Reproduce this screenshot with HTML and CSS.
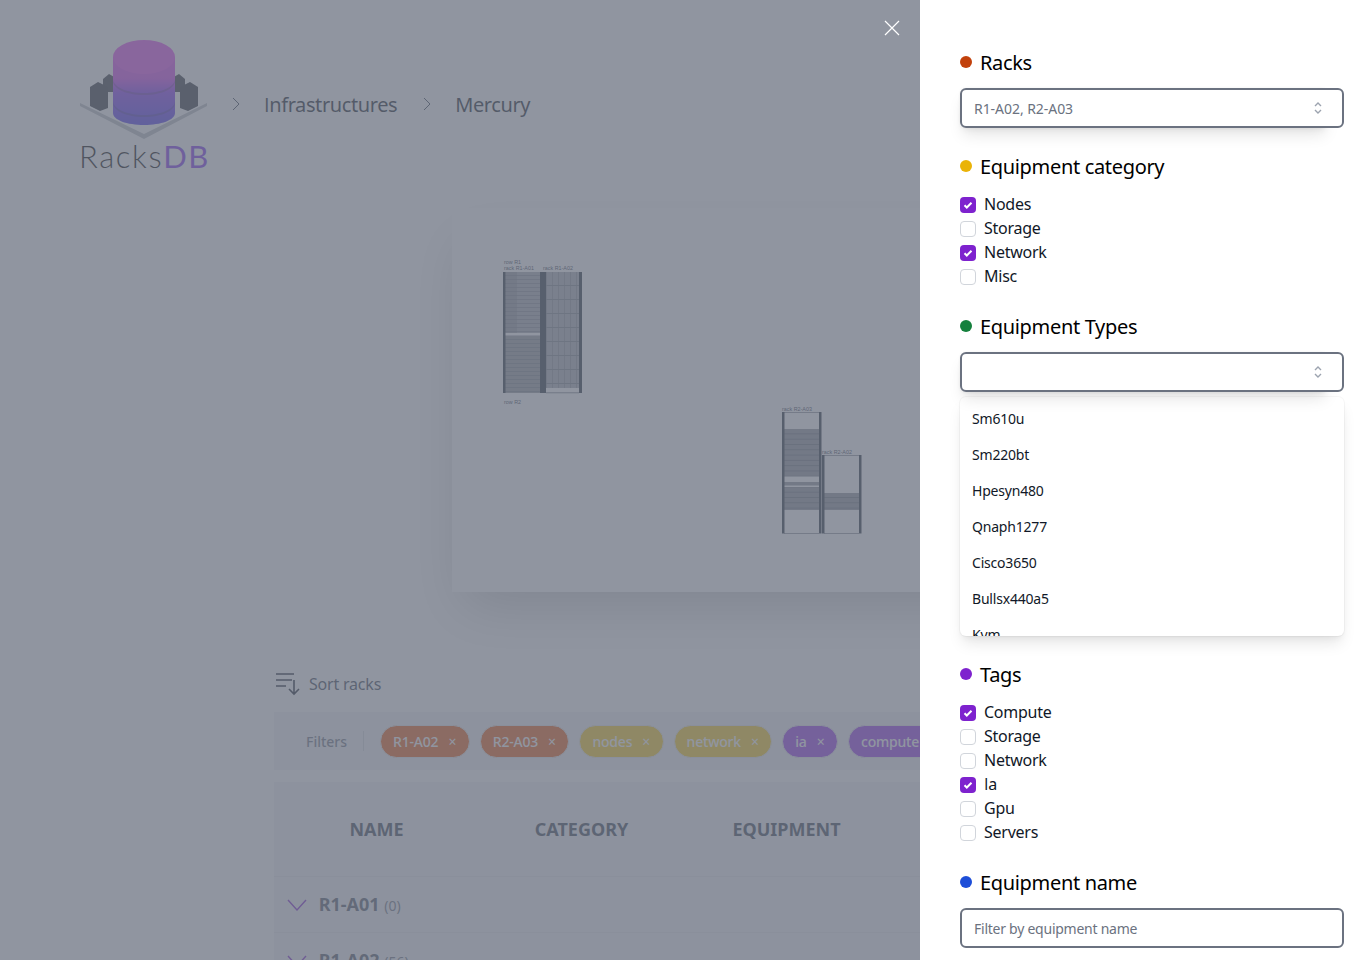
FILE: index.html
```html
<!DOCTYPE html>
<html>
  <head>
    <meta charset="utf-8" />
    <title>RacksDB</title>
    <link rel="stylesheet" href="styles.css">
  </head>
  <body>
    <header class="top">
      <div class="brand">
        <svg class="logo" viewBox="79 40 130 100" width="130" height="100">
          <defs>
            <linearGradient id="stack" x1="0" y1="40" x2="0" y2="125" gradientUnits="userSpaceOnUse">
              <stop offset="0" stop-color="#e040f0"/>
              <stop offset=".45" stop-color="#d03cf0"/>
              <stop offset=".62" stop-color="#8030f5"/>
              <stop offset="1" stop-color="#4432ee"/>
            </linearGradient>
          </defs>
          <polygon points="80,103 144,134 207,103 207,106 144,139 80,106" fill="#bcbec3"/>
          <polygon points="103,79 109,74 116,78 116,92 103,92" fill="#2e323a"/>
          <polygon points="172,78 179,74 185,79 185,92 172,92" fill="#2e323a"/>
          <polygon points="90,87 98,82 108,87 108,108 100,111 90,106" fill="#282c34"/>
          <polygon points="198,87 190,82 180,87 180,108 188,111 198,106" fill="#282c34"/>
          <path d="M113 57v56c0 7 14 12 31 12s31-5 31-12V57z" fill="url(#stack)"/>
          <path d="M113 79c0 8 14 14 31 14s31-6 31-14v2c0 8-14 14-31 14s-31-6-31-14z" fill="#5a2a90" opacity=".5"/>
          <path d="M113 101c0 8 14 14 31 14s31-6 31-14v2c0 8-14 14-31 14s-31-6-31-14z" fill="#3a2a90" opacity=".5"/>
          <ellipse cx="144" cy="57" rx="31" ry="17" fill="#e444f2"/>
        </svg>
        <div class="logo-text">Racks<span class="logo-db">DB</span></div>
      </div>
      <nav class="crumbs">
        <svg class="crumb-sep" viewBox="0 0 8 14" width="8" height="14"><path d="M1 1l6 6-6 6" fill="none" stroke="#374151" stroke-width="1"/></svg>
        <a class="crumb"><span class="plain-i">I</span>nfrastructures</a>
        <svg class="crumb-sep" viewBox="0 0 8 14" width="8" height="14"><path d="M1 1l6 6-6 6" fill="none" stroke="#374151" stroke-width="1"/></svg>
        <a class="crumb">Mercury</a>
      </nav>
    </header>

    <section class="diagram">
      <svg viewBox="452 208 620 384" width="620" height="384">
        <defs>
          <pattern id="rows" x="0" y="272" width="8" height="4" patternUnits="userSpaceOnUse">
            <rect width="8" height="4" fill="#a4a7ae"/>
            <rect y="3" width="8" height="1" fill="#858992"/>
          </pattern>
          <pattern id="grid" x="546" y="272" width="6" height="14" patternUnits="userSpaceOnUse">
            <rect width="6" height="14" fill="#a8abb2"/>
            <rect width="1" height="14" fill="#8a8e97"/>
            <rect y="13" width="6" height="1" fill="#7a7f89"/>
          </pattern>
          <pattern id="units" x="0" y="429" width="8" height="5.3" patternUnits="userSpaceOnUse">
            <rect width="8" height="5.3" fill="#8a8e96"/>
            <rect y="4.5" width="8" height=".8" fill="#646973"/>
          </pattern>
        </defs>

        <text class="tiny" x="504" y="264">row R1</text>
        <text class="tiny" x="504" y="270">rack R1-A01</text>
        <text class="tiny" x="543" y="270">rack R1-A02</text>
        <text class="tiny" x="504" y="404">row R2</text>
        <text class="tiny" x="782" y="411">rack R2-A03</text>
        <text class="tiny" x="822" y="454">rack R2-A02</text>

        <rect x="505" y="272" width="36" height="121" fill="url(#rows)"/>
        <rect x="506" y="272" width="11" height="61" fill="#6b707a" opacity=".35"/>
        <rect x="505" y="333" width="36" height="2.5" fill="#fff"/>
        <rect x="505" y="336" width="36" height="57" fill="#5d626c" opacity=".25"/>
        <rect x="503" y="272" width="2.5" height="121" fill="#1f2937"/>
        <rect x="540" y="272" width="3" height="121" fill="#1f2937"/>

        <rect x="546" y="272" width="33" height="116" fill="url(#grid)"/>
        <rect x="543" y="272" width="3" height="121" fill="#1f2937"/>
        <rect x="579" y="272" width="3" height="121" fill="#1f2937"/>
        <rect x="546" y="392.5" width="33" height=".7" fill="#4b5563"/>

        <rect x="784" y="429" width="35" height="47.5" fill="url(#units)"/>
        <rect x="784" y="482" width="35" height="3.5" fill="#8a8e96"/>
        <rect x="784" y="487" width="35" height="23" fill="url(#units)"/>
        <rect x="784" y="412" width="35" height=".6" fill="#4b5563"/>
        <rect x="784" y="533" width="35" height=".6" fill="#4b5563"/>
        <rect x="782" y="412" width="2.5" height="121.5" fill="#1f2937"/>
        <rect x="819" y="412" width="2.5" height="121.5" fill="#1f2937"/>

        <rect x="824" y="493" width="35" height="17" fill="url(#units)"/>
        <rect x="824" y="455" width="35" height=".6" fill="#4b5563"/>
        <rect x="824" y="533" width="35" height=".6" fill="#4b5563"/>
        <rect x="822" y="455" width="2.5" height="78.5" fill="#1f2937"/>
        <rect x="859" y="455" width="2.5" height="78.5" fill="#1f2937"/>
      </svg>
    </section>

    <main class="results">
      <div class="sort">
        <svg viewBox="0 0 24 24" width="24" height="24" fill="none" stroke="#111827" stroke-width="1.6">
          <path d="M0 2h18M0 8h16M0 14h10M18 8v14M13 17l5 5 5-5"/>
        </svg>
        <span>Sort racks</span>
      </div>

      <div class="filters">
        <span class="filters-label">Filters</span>
        <span class="filters-sep"></span>
        <span class="chip chip-rack">R1-A02<i class="chip-x">×</i></span>
        <span class="chip chip-rack">R2-A03<i class="chip-x">×</i></span>
        <span class="chip chip-cat">nodes<i class="chip-x">×</i></span>
        <span class="chip chip-cat">network<i class="chip-x">×</i></span>
        <span class="chip chip-tag">ia<i class="chip-x">×</i></span>
        <span class="chip chip-tag">compute<i class="chip-x">×</i></span>
      </div>

      <table class="racks">
        <thead>
          <tr>
            <th>Name</th>
            <th>Category</th>
            <th>Equipment</th>
            <th></th>
          </tr>
        </thead>
        <tbody>
          <tr>
            <td colspan="4">
              <svg class="row-arrow" viewBox="0 0 20 12" width="20" height="12"><path d="M1 1l9 10 9-10" fill="none" stroke="#7e22ce" stroke-width="1.4"/></svg>
              <b>R1-A01</b> <small>(0)</small>
            </td>
          </tr>
          <tr>
            <td colspan="4">
              <svg class="row-arrow" viewBox="0 0 20 12" width="20" height="12"><path d="M1 1l9 10 9-10" fill="none" stroke="#7e22ce" stroke-width="1.4"/></svg>
              <b>R1-A02</b> <small>(56)</small>
            </td>
          </tr>
        </tbody>
      </table>
    </main>

    <div class="overlay"></div>

    <button class="close">
      <svg viewBox="0 0 16 16" width="16" height="16"><path d="M1 1l14 14M15 1L1 15" stroke="#fff" stroke-width="1.2"/></svg>
    </button>

    <aside class="panel">
      <h3 class="title"><span class="dot dot-red"></span>Racks</h3>
      <div class="combo">
        <div class="field">
          <span class="value">R1-A02, R2-A03</span>
          <svg class="updown" viewBox="0 0 20 20" width="20" height="20"><path d="M7 8l3-3 3 3M13 12l-3 3-3-3" fill="none" stroke="#9ca3af" stroke-width="1.4"/></svg>
        </div>
      </div>

      <h3 class="title"><span class="dot dot-yellow"></span>Equipment category</h3>
      <ul class="checks">
        <li><span class="box on"><svg viewBox="0 0 16 16"><path d="M4.5 8.2l2.3 2.3 4.7-4.8" fill="none" stroke="#fff" stroke-width="2"/></svg></span>Nodes</li>
        <li><span class="box"></span>Storage</li>
        <li><span class="box on"><svg viewBox="0 0 16 16"><path d="M4.5 8.2l2.3 2.3 4.7-4.8" fill="none" stroke="#fff" stroke-width="2"/></svg></span>Network</li>
        <li><span class="box"></span>Misc</li>
      </ul>

      <h3 class="title"><span class="dot dot-green"></span>Equipment Types</h3>
      <div class="combo">
        <div class="field">
          <span class="value"></span>
          <svg class="updown" viewBox="0 0 20 20" width="20" height="20"><path d="M7 8l3-3 3 3M13 12l-3 3-3-3" fill="none" stroke="#9ca3af" stroke-width="1.4"/></svg>
        </div>
      </div>
      <ul class="options">
        <li>Sm610u</li>
        <li>Sm220bt</li>
        <li>Hpesyn480</li>
        <li>Qnaph1277</li>
        <li>Cisco3650</li>
        <li>Bullsx440a5</li>
        <li>Kvm</li>
      </ul>

      <h3 class="title"><span class="dot dot-purple"></span>Tags</h3>
      <ul class="checks">
        <li><span class="box on"><svg viewBox="0 0 16 16"><path d="M4.5 8.2l2.3 2.3 4.7-4.8" fill="none" stroke="#fff" stroke-width="2"/></svg></span>Compute</li>
        <li><span class="box"></span>Storage</li>
        <li><span class="box"></span>Network</li>
        <li><span class="box on"><svg viewBox="0 0 16 16"><path d="M4.5 8.2l2.3 2.3 4.7-4.8" fill="none" stroke="#fff" stroke-width="2"/></svg></span><span><span class="plain-i">I</span>a</span></li>
        <li><span class="box"></span>Gpu</li>
        <li><span class="box"></span>Servers</li>
      </ul>

      <h3 class="title"><span class="dot dot-blue"></span>Equipment name</h3>
      <div class="field">
        <span class="value placeholder">Filter by equipment name</span>
      </div>
    </aside>
  </body>
</html>
```

FILE: styles.css
```css
* {
  box-sizing: border-box;
}

html, body {
  height: 960px;
  margin: 0;
  overflow: hidden;
}

body {
  background: #fff;
  color: #111827;
  font-family: "Noto Sans", "Open Sans", sans-serif;
}

.plain-i {
  font-family: "Open Sans", sans-serif;
}

/* page behind the drawer */
.top {
  display: flex;
  align-items: flex-start;
  height: 208px;
  padding: 40px 0 0 79px;
}

.brand {
  flex: none;
  width: 130px;
}

.logo {
  display: block;
}

.logo-text {
  margin-top: -1px;
  font-family: "Lato", sans-serif;
  font-size: 31px;
  font-weight: 300;
  line-height: 34px;
  letter-spacing: 1.6px;
  white-space: nowrap;
  color: #000;
}

.logo-db {
  color: #7c2ff0;
  font-weight: 400;
}

.crumbs {
  display: flex;
  align-items: center;
  height: 28px;
  margin: 50px 0 0 23px;
}

.crumb {
  font-size: 20px;
  letter-spacing: -.4px;
  color: #111827;
}

.crumb-sep {
  margin-right: 24px;
}

.crumb + .crumb-sep {
  margin-left: 26px;
}

.diagram {
  height: 384px;
  margin-left: 452px;
  background: #fff;
  box-shadow: 0 25px 50px -12px rgba(0, 0, 0, .25);
}

.diagram svg {
  display: block;
}

.tiny {
  font-family: "Liberation Sans", sans-serif;
  font-size: 5.4px;
  fill: #374151;
}

.results {
  width: 1094px;
  margin: 80px 0 0 274px;
}

.sort {
  display: flex;
  align-items: center;
  gap: 9px;
  height: 24px;
  padding-left: 2px;
  color: #374151;
  letter-spacing: -.2px;
}

.filters {
  display: flex;
  align-items: center;
  height: 58px;
  margin-top: 16px;
  padding-left: 32px;
  background: #f3f4f6;
  font-size: 14px;
}

.filters-label {
  color: #6b7280;
  font-weight: 500;
}

.filters-sep {
  width: 1px;
  height: 20px;
  margin: 0 16px;
  background: #d1d5db;
}

.chip {
  display: inline-flex;
  align-items: center;
  flex: none;
  height: 33px;
  margin-right: 10px;
  padding: 0 12.5px 0 12px;
  border: 1px solid #e5e7eb;
  border-radius: 17px;
  color: #fff;
  font-weight: 500;
  letter-spacing: -.2px;
}

.chip-rack {
  background: #ea580c;
}

.chip-cat {
  background: #facc15;
}

.chip-tag {
  background: #9333ea;
}

.chip-x {
  margin-left: 10px;
  font-style: normal;
  font-weight: 400;
}

.racks {
  width: 820px;
  margin-top: 12px;
  background: #f3f4f6;
  border-collapse: collapse;
  table-layout: fixed;
}

.racks th {
  width: 205px;
  height: 94px;
  color: #374151;
  font-size: 18px;
  text-transform: uppercase;
}

.racks td {
  height: 56px;
  padding: 0 0 0 13px;
  border-top: 1px solid #e5e7eb;
  color: #4b5563;
  font-size: 18px;
}

.racks small {
  font-size: 14px;
  color: #6b7280;
}

.row-arrow {
  margin-right: 7px;
}

/* drawer */
.overlay {
  position: fixed;
  top: 0;
  right: 0;
  bottom: 0;
  left: 0;
  background: rgba(107, 114, 128, .75);
}

.close {
  position: fixed;
  top: 20px;
  left: 884px;
  padding: 0;
  border: 0;
  background: none;
  line-height: 0;
}

.panel {
  position: fixed;
  top: 0;
  right: 0;
  bottom: 0;
  width: 448px;
  padding: 48px 24px 0 40px;
  background: #fff;
  overflow: hidden;
}

.title {
  display: flex;
  align-items: center;
  height: 28px;
  margin: 24px 0 0;
  color: #000;
  font-size: 20px;
  font-weight: 400;
  letter-spacing: -.33px;
}

.title:first-child {
  margin-top: 0;
}

.dot {
  width: 12px;
  height: 12px;
  margin-right: 8px;
  border-radius: 50%;
}

.dot-red {
  background: #c2410c;
}

.dot-yellow {
  background: #eab308;
}

.dot-green {
  background: #15803d;
}

.dot-purple {
  background: #7e22ce;
}

.dot-blue {
  background: #1d4ed8;
}

.combo {
  position: relative;
  z-index: 0;
}

.combo::before {
  content: "";
  position: absolute;
  z-index: -1;
  top: 0;
  left: 0;
  right: 16px;
  bottom: 0;
  border-radius: 6px;
  background: #fff;
  box-shadow: 0 10px 15px -3px rgba(0, 0, 0, .1), 0 4px 6px -2px rgba(0, 0, 0, .05), 0 0 3px rgba(0, 0, 0, .06);
}

.field {
  display: flex;
  align-items: center;
  justify-content: space-between;
  height: 40px;
  margin-top: 12px;
  padding: 0 14px 0 12px;
  border: 2px solid #6b7280;
  border-radius: 6px;
  background: #fff;
}

.combo .field {
  position: relative;
}

.value {
  color: #6b7280;
  font-size: 14px;
  letter-spacing: -.05px;
}

.placeholder {
  letter-spacing: -.25px;
}

.checks {
  margin: 12px 0 0;
  padding: 0;
  list-style: none;
}

.checks li {
  display: flex;
  align-items: center;
  gap: 8px;
  height: 24px;
  font-size: 16px;
  letter-spacing: -.25px;
  color: #111827;
}

.box {
  width: 16px;
  height: 16px;
  margin-top: 2px;
  border: 1px solid #d1d5db;
  border-radius: 4px;
  background: #fff;
}

.box.on {
  border: 0;
  background: #7e22ce;
}

.box svg {
  display: block;
}

.options {
  height: 239px;
  margin: 5px 0 0;
  padding: 4px 0;
  overflow: hidden;
  border-radius: 6px;
  background: #fff;
  box-shadow: 0 10px 15px -3px rgba(0, 0, 0, .1), 0 4px 6px -2px rgba(0, 0, 0, .05), 0 0 0 1px rgba(0, 0, 0, .03);
  list-style: none;
}

.options li {
  display: flex;
  align-items: center;
  height: 36px;
  padding: 0 0 2px 12px;
  font-size: 14px;
  letter-spacing: -.2px;
  color: #111827;
}
```
